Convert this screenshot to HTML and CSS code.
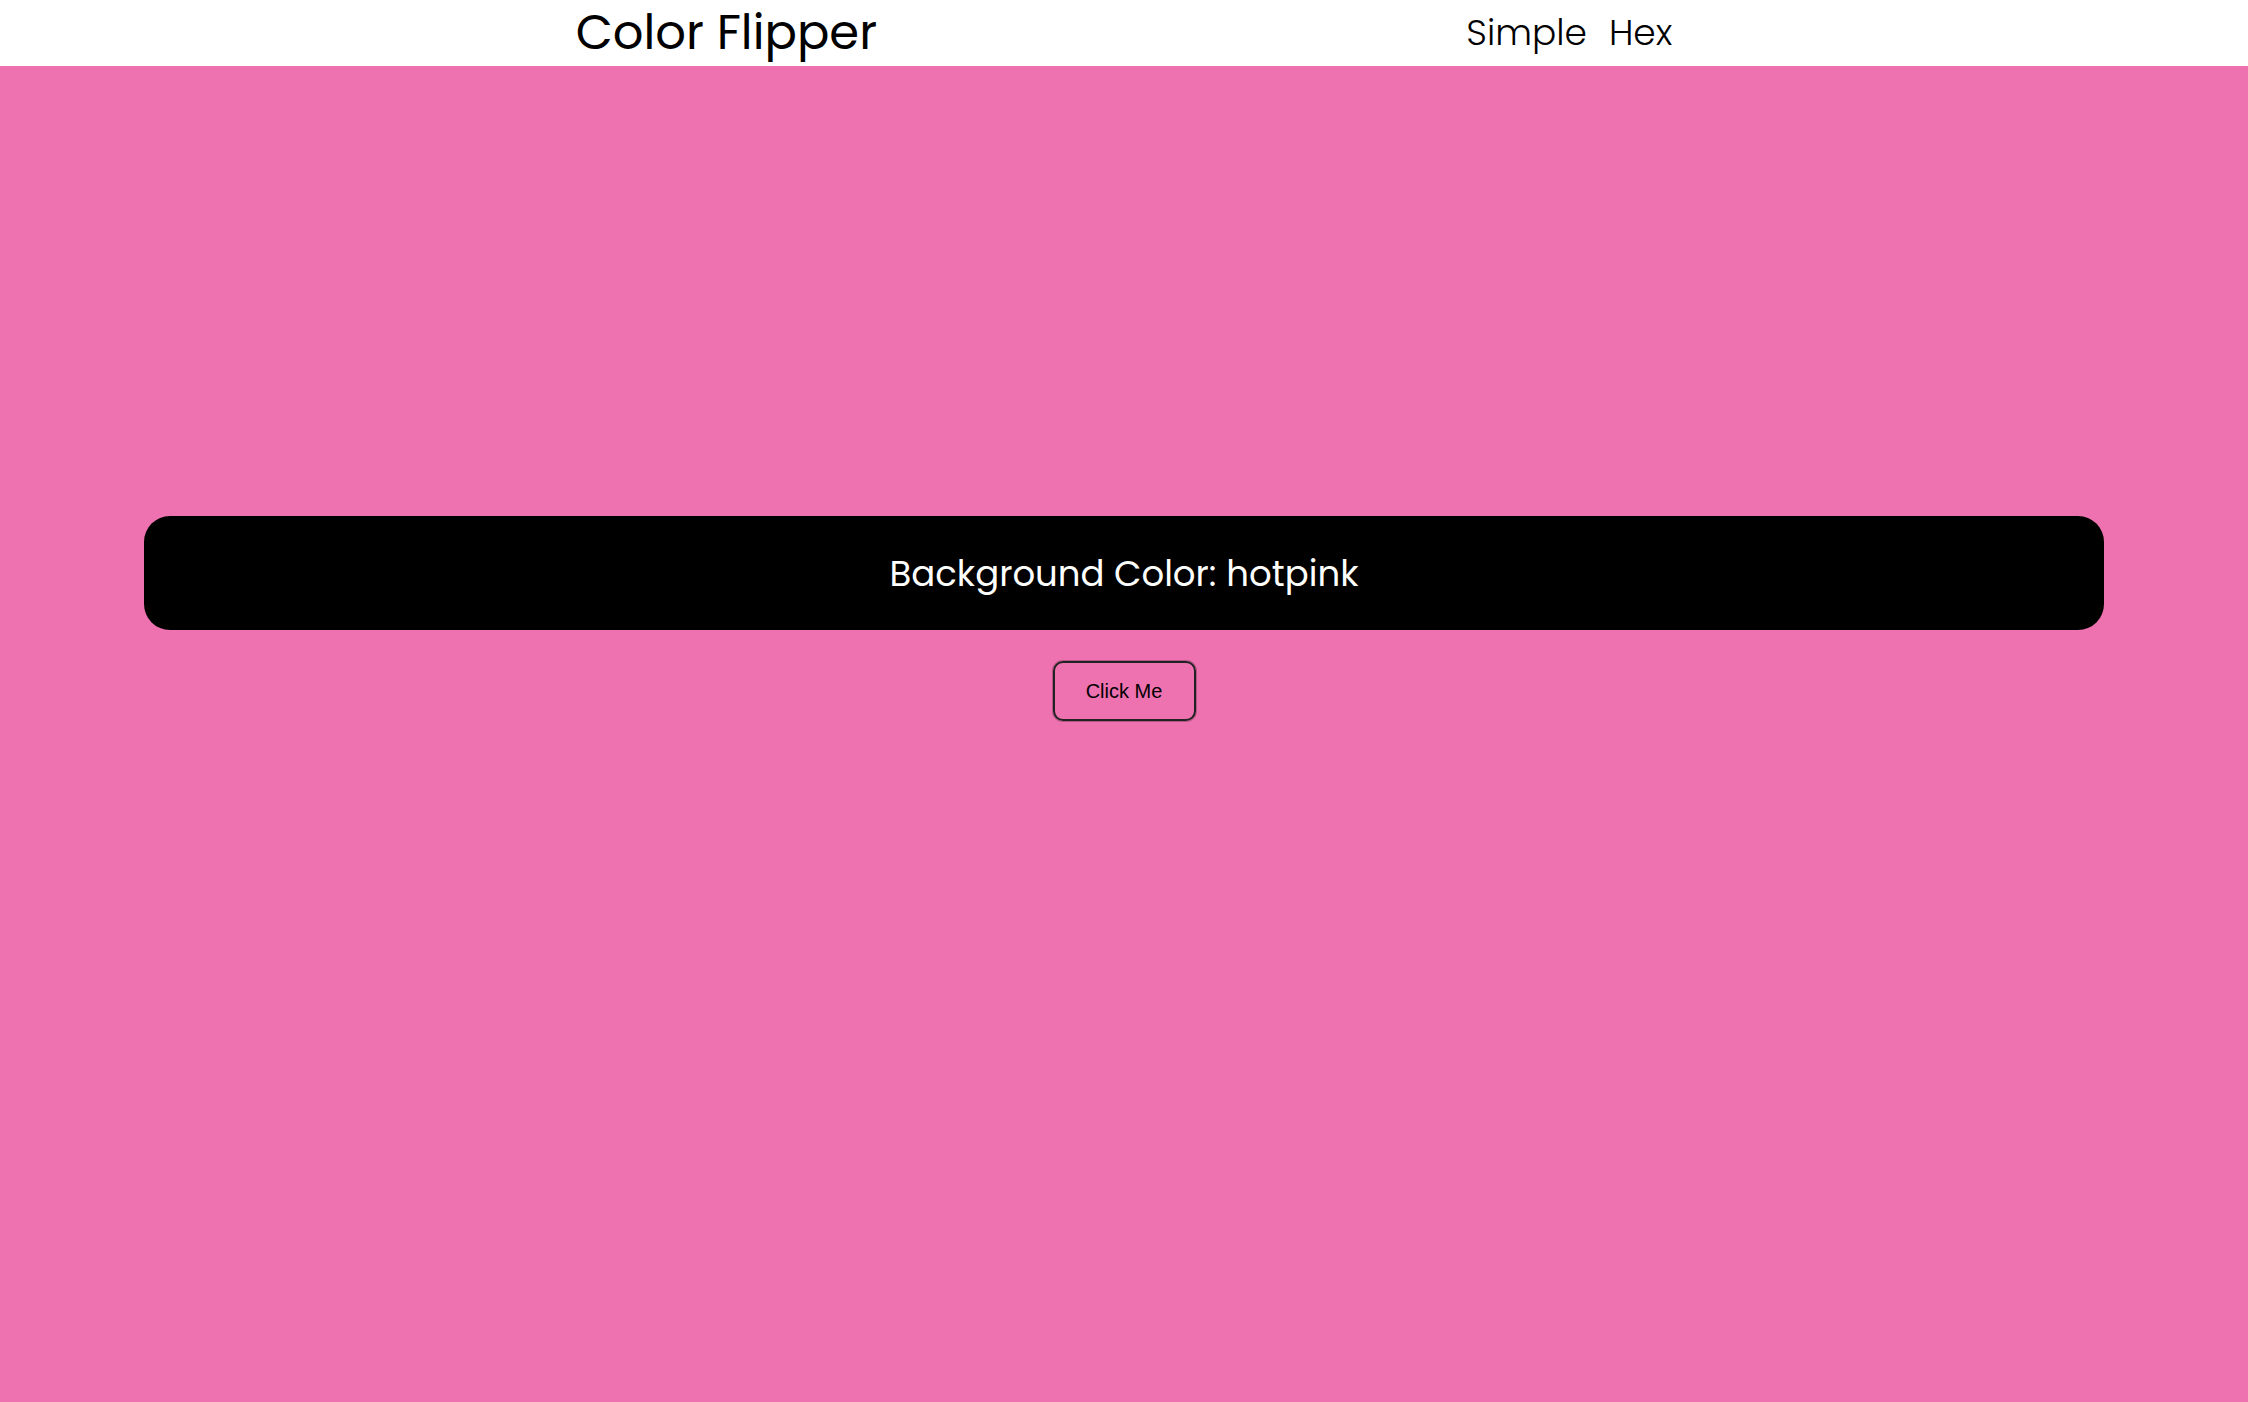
FILE: index.html
```html
<!DOCTYPE html>
<html lang="en">
<head>
  <meta charset="UTF-8" />
  <meta name="viewport" content="width=device-width, initial-scale=1.0"/>
  <title>Color Flipper</title>
  <link rel="stylesheet" href="styles.css">
</head>
<body>
  <nav class="nav">
    <div class="nav-center">
      <h4 class="brand">Color Flipper</h4>
      <ul class="nav-links">
        <li><a href="#">Simple</a></li>
        <li><a href="#">Hex</a></li>
      </ul>
    </div>
  </nav>

  <main class="main">
    <div class="container">
      <h2 class="color-label">Background Color: <span class="color">hotpink</span></h2>
      <button class="btn" id="btn">Click Me</button>
    </div>
  </main>

  <script>
    const colors = ["hotpink", "green", "red", "rgba(133,122,200)", "#f15025"];
    const btn = document.getElementById("btn");
    const color = document.querySelector(".color");

    btn.addEventListener("click", function () {
      const pick = colors[Math.floor(Math.random() * colors.length)];
      document.body.style.backgroundColor = pick;
      color.textContent = pick;
    });
  </script>
</body>
</html>
```

FILE: styles.css
```css
* {
  margin: 0;
  padding: 0;
  box-sizing: border-box;
}
body {
  font-family: Poppins, "Open Sans", sans-serif;
  background-color: #ee72b0;
  min-height: 100vh;
}
.nav {
  background-color: #fff;
  height: 66px;
}
.nav-center {
  width: 75%;
  height: 100%;
  margin: 0 auto;
  display: flex;
  align-items: center;
  justify-content: space-around;
}
.brand {
  font-size: 48px;
  font-weight: 400;
  color: #000;
  line-height: 1;
}
.nav-links {
  list-style: none;
  display: flex;
  gap: 22px;
}
.nav-links a {
  text-decoration: none;
  color: #000;
  font-size: 36px;
  font-weight: 300;
  line-height: 1;
}
.main {
  padding-top: 450px;
}
.container {
  display: flex;
  flex-direction: column;
  align-items: center;
}
.color-label {
  width: 87.2%;
  height: 114px;
  background-color: #000;
  color: #fff;
  border-radius: 26px;
  display: flex;
  align-items: center;
  justify-content: center;
  font-size: 35.5px;
  font-weight: 400;
}
.color-label .color {
  margin-left: 0.28em;
}
.btn {
  margin-top: 31px;
  width: 143px;
  height: 60px;
  background: transparent;
  border: 2px solid #222;
  border-radius: 10px;
  box-shadow: 0 0 0 1px rgba(0, 0, 0, 0.25);
  font-family: "Liberation Sans", Arial, sans-serif;
  font-size: 20px;
  color: #000;
  cursor: pointer;
}
```
